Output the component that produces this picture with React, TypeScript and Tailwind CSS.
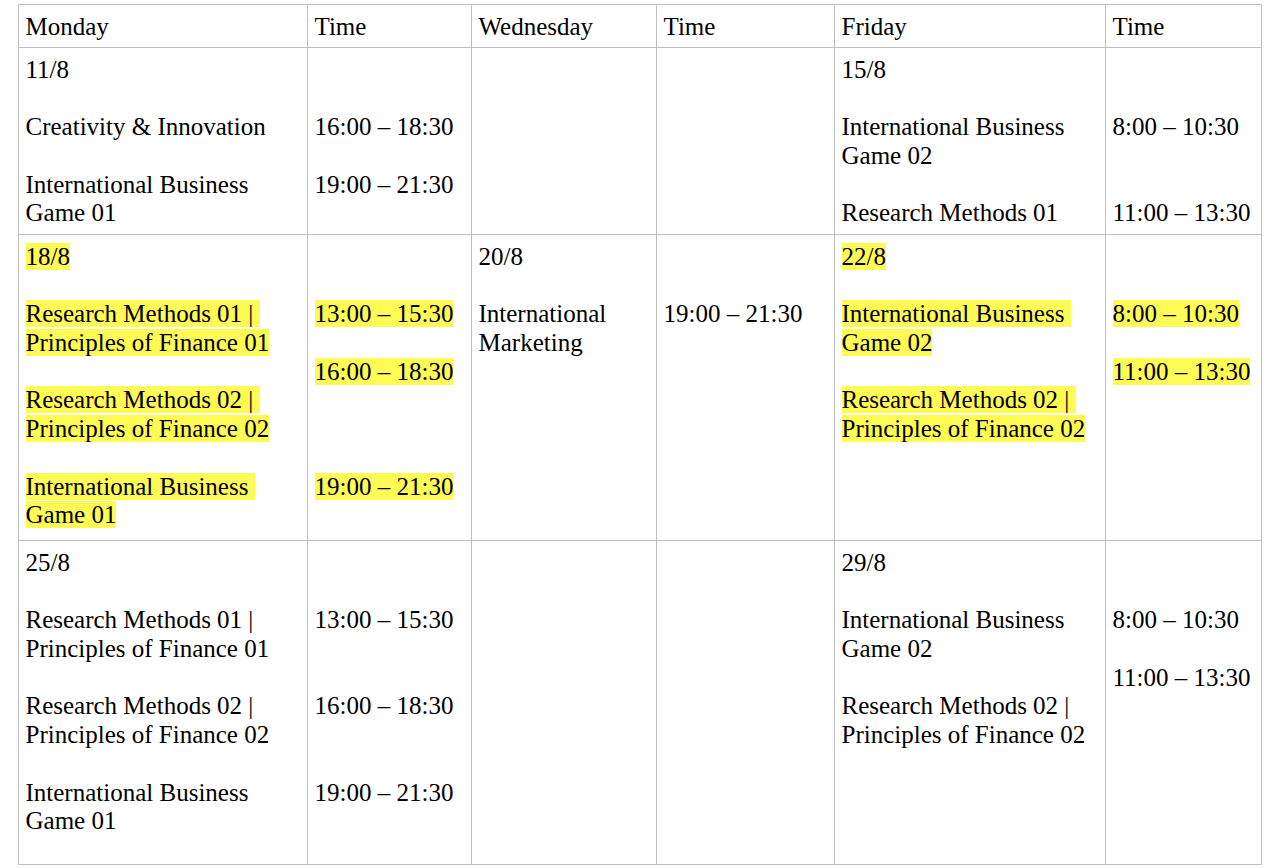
import React from "react";

type Line = string;

const Cell = ({ lines, hl = false }: { lines: Line[]; hl?: boolean }) => (
  <td className="border border-[#bfbfbf] align-top pl-[6.5px] pr-[2px] pt-[8px] pb-0">
    {lines.map((l, i) => (
      <div key={i} className="h-[28.7px] leading-[28.7px] whitespace-nowrap">
        {l === "" ? (
          "\u00a0"
        ) : hl ? (
          <span className="bg-[#fffb55]">{l}</span>
        ) : (
          l
        )}
      </div>
    ))}
  </td>
);

const HeadCell = ({ text }: { text: string }) => (
  <td className="border border-[#bfbfbf] align-top pl-[6.5px] pt-[8px] pb-0">
    <div className="h-[28.7px] leading-[28.7px] whitespace-nowrap">{text}</div>
  </td>
);

export default function App() {
  return (
    <div className="bg-white w-[1280px] h-[868px] overflow-hidden font-['Liberation_Serif','Times_New_Roman',serif] text-[25px] text-black pt-[4px] pl-[18px]">
      <table className="border-collapse table-fixed w-[1243px]">
        <colgroup>
          <col className="w-[289px]" />
          <col className="w-[164px]" />
          <col className="w-[185px]" />
          <col className="w-[178px]" />
          <col className="w-[271px]" />
          <col className="w-[156px]" />
        </colgroup>
        <tbody>
          <tr className="h-[43px]">
            <HeadCell text="Monday" />
            <HeadCell text="Time" />
            <HeadCell text="Wednesday" />
            <HeadCell text="Time" />
            <HeadCell text="Friday" />
            <HeadCell text="Time" />
          </tr>
          <tr className="h-[187px]">
            <Cell
              lines={[
                "11/8",
                "",
                "Creativity & Innovation",
                "",
                "International Business",
                "Game 01",
              ]}
            />
            <Cell lines={["", "", "16:00 – 18:30", "", "19:00 – 21:30"]} />
            <Cell lines={[]} />
            <Cell lines={[]} />
            <Cell
              lines={[
                "15/8",
                "",
                "International Business",
                "Game 02",
                "",
                "Research Methods 01",
              ]}
            />
            <Cell lines={["", "", "8:00 – 10:30", "", "", "11:00 – 13:30"]} />
          </tr>
          <tr className="h-[306px]">
            <Cell
              hl
              lines={[
                "18/8",
                "",
                "Research Methods 01 |\u00a0",
                "Principles of Finance 01",
                "",
                "Research Methods 02 |\u00a0",
                "Principles of Finance 02",
                "",
                "International Business\u00a0",
                "Game 01",
              ]}
            />
            <Cell
              hl
              lines={["", "", "13:00 – 15:30", "", "16:00 – 18:30", "", "", "", "19:00 – 21:30"]}
            />
            <Cell lines={["20/8", "", "International", "Marketing"]} />
            <Cell lines={["", "", "19:00 – 21:30"]} />
            <Cell
              hl
              lines={[
                "22/8",
                "",
                "International Business\u00a0",
                "Game 02",
                "",
                "Research Methods 02 |\u00a0",
                "Principles of Finance 02",
              ]}
            />
            <Cell hl lines={["", "", "8:00 – 10:30", "", "11:00 – 13:30"]} />
          </tr>
          <tr className="h-[324px]">
            <Cell
              lines={[
                "25/8",
                "",
                "Research Methods 01 |",
                "Principles of Finance 01",
                "",
                "Research Methods 02 |",
                "Principles of Finance 02",
                "",
                "International Business",
                "Game 01",
              ]}
            />
            <Cell
              lines={["", "", "13:00 – 15:30", "", "", "16:00 – 18:30", "", "", "19:00 – 21:30"]}
            />
            <Cell lines={[]} />
            <Cell lines={[]} />
            <Cell
              lines={[
                "29/8",
                "",
                "International Business",
                "Game 02",
                "",
                "Research Methods 02 |",
                "Principles of Finance 02",
              ]}
            />
            <Cell lines={["", "", "8:00 – 10:30", "", "11:00 – 13:30"]} />
          </tr>
        </tbody>
      </table>
    </div>
  );
}
